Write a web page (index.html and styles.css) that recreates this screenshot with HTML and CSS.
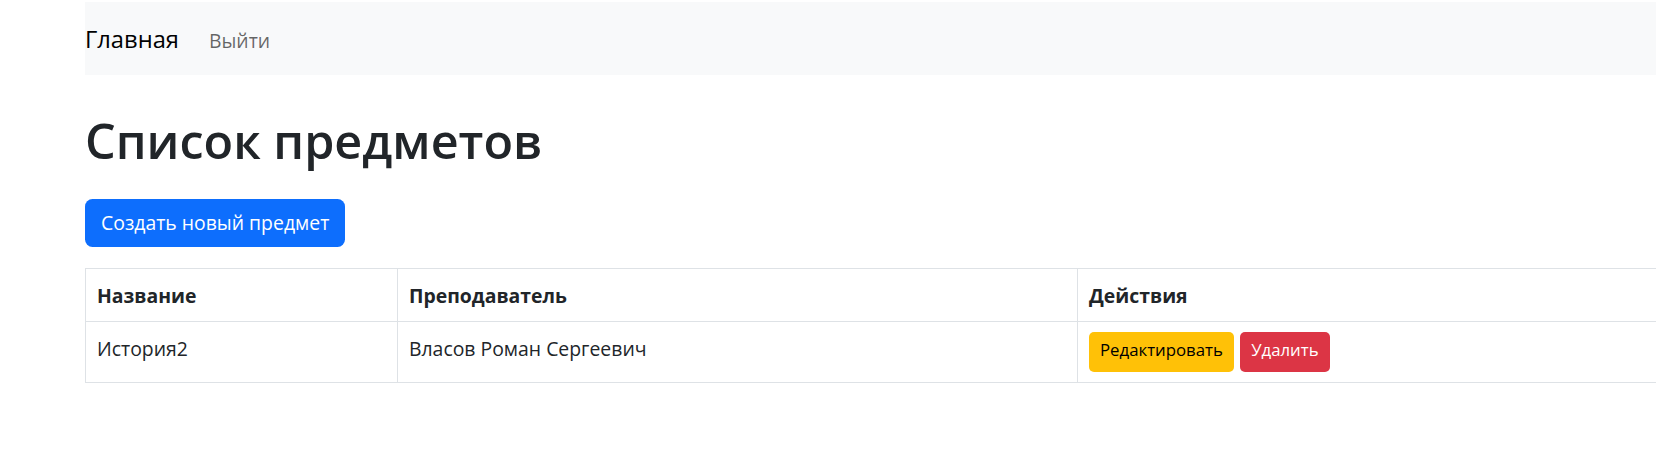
FILE: index.html
```html
<!DOCTYPE html>
<html lang="ru">
<head>
<meta charset="utf-8">
<title>Список предметов</title>
<link rel="stylesheet" href="styles.css">
</head>
<body>
<div class="page">
  <nav class="navbar">
    <a class="brand" href="#">Главная</a>
    <a class="nav-link" href="#">Выйти</a>
  </nav>
  <h1 class="title">Список предметов</h1>
  <div class="toolbar">
    <a class="btn btn-primary" href="#">Создать новый предмет</a>
  </div>
  <table class="table">
    <thead>
      <tr>
        <th class="col-name">Название</th>
        <th class="col-teacher">Преподаватель</th>
        <th class="col-actions">Действия</th>
      </tr>
    </thead>
    <tbody>
      <tr>
        <td>История2</td>
        <td>Власов Роман Сергеевич</td>
        <td class="cell-actions">
          <div class="actions">
            <a class="btn btn-sm btn-warning" href="#">Редактировать</a>
            <a class="btn btn-sm btn-danger" href="#">Удалить</a>
          </div>
        </td>
      </tr>
    </tbody>
  </table>
</div>
</body>
</html>
```

FILE: styles.css
```css
html, body {
  margin: 0;
  padding: 0;
  overflow: hidden;
  background: #fff;
}

body {
  font-family: "Open Sans", "Noto Sans", sans-serif;
  font-size: 19.4px;
  line-height: 30px;
  color: #212529;
  padding-top: 2px;
}

.page {
  margin-left: 85px;
  margin-right: -40px;
}

.navbar {
  display: flex;
  align-items: baseline;
  box-sizing: border-box;
  height: 73px;
  padding-top: 22px;
  background: #f8f9fa;
}

.brand {
  font-size: 23.7px;
  line-height: 30px;
  color: #000;
  text-decoration: none;
  margin-right: 20px;
}

.nav-link {
  font-size: 19.4px;
  line-height: 30px;
  color: rgba(0, 0, 0, 0.6);
  text-decoration: none;
  padding: 0 10px;
}

.title {
  font-size: 48.5px;
  font-weight: 600;
  line-height: 60px;
  margin: 35px 0 29px;
  color: #212529;
}

.toolbar {
  display: flex;
}

.btn {
  display: inline-block;
  font-size: 19.4px;
  line-height: 30px;
  padding: 7.75px 15px;
  border: 1px solid transparent;
  border-radius: 7.5px;
  text-decoration: none;
}

.btn-primary {
  background: #0d6efd;
  color: #fff;
}

.actions {
  display: flex;
  gap: 6.3px;
}

.btn-sm {
  font-size: 16.8px;
  line-height: 28px;
  padding: 3.5px 10px 6.5px;
  border-radius: 5px;
}

.btn-warning {
  background: #ffc107;
  color: #000;
}

.btn-danger {
  background: #dc3545;
  color: #fff;
}

.table {
  margin-top: 21.5px;
  width: 100%;
  border-collapse: collapse;
  table-layout: fixed;
}

.table th,
.table td {
  border: 1px solid #dee2e6;
  text-align: left;
  vertical-align: top;
  padding: 12px 11px 6px;
}

.table th {
  font-weight: 700;
  padding-top: 11.8px;
  padding-bottom: 10.2px;
}

.table td.cell-actions {
  padding-top: 10px;
  padding-bottom: 10px;
}

.col-name { width: 312px; box-sizing: border-box; }
.col-teacher { width: 680px; box-sizing: border-box; }
```
